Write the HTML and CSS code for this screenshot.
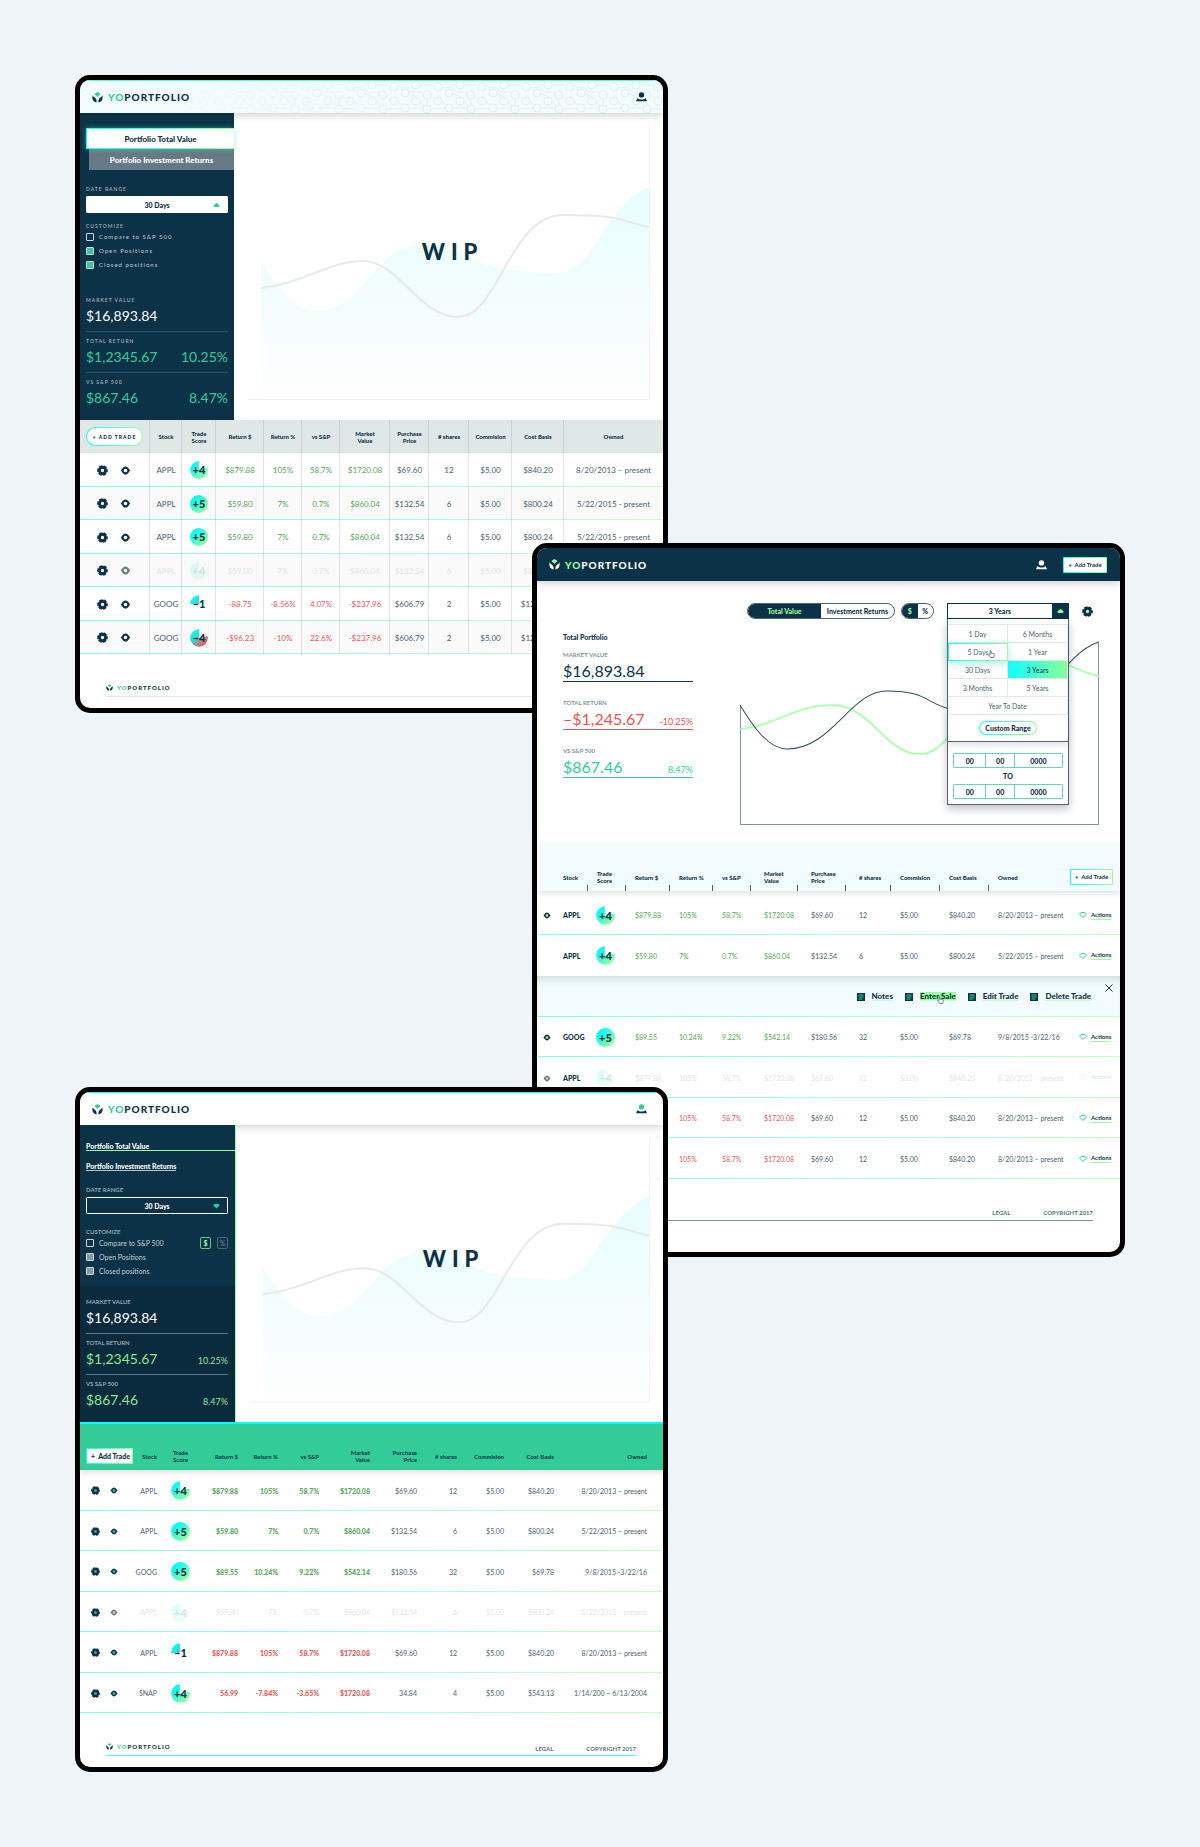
FILE: index.html
```html
<!DOCTYPE html>
<html lang="en">
<head>
<meta charset="utf-8">
<title>YoPortfolio</title>
<link rel="stylesheet" href="styles.css">
</head>
<body>
<svg class="defs" aria-hidden="true">
  <defs>
    <linearGradient id="area" x1="0" y1="0" x2="0" y2="1">
      <stop offset="0" stop-color="#e6feff"/><stop offset=".5" stop-color="#f2fdfc"/><stop offset="1" stop-color="#fefefe"/>
    </linearGradient>
    <pattern id="circuit" width="44" height="32" patternUnits="userSpaceOnUse">
      <g fill="none" stroke="#e3efef">
        <circle cx="6" cy="6" r="4"/><circle cx="28" cy="4" r="4"/><circle cx="17" cy="12" r="4"/><circle cx="39" cy="14" r="4"/>
        <circle cx="6" cy="20" r="4"/><circle cx="28" cy="20" r="4"/><circle cx="17" cy="27" r="4"/><circle cx="39" cy="28" r="4"/>
        <path d="M10 6h10l4 5h11M21 12l7 4M10 20l3 4M32 20l4 5M0 28h13M21 27h14M39 18v6M32 4h12"/>
      </g>
    </pattern>
  </defs>
  <symbol id="logo" viewBox="0 0 11 11">
    <path class="leaf-top" d="M2.6 1.9C3.4 1.6 4 .3 5.5.3S7.600 1.600 8.400 1.900C8.200 3.300 6.200 3 5.500 5 4.800 3 2.800 3.300 2.600 1.900Z"/>
    <path d="M.8 3.200C-.4 6.200.9 9.600 4.300 10.600 5.300 8.400 3.800 6 2.300 5.200 1.600 4.800 1 4.200.8 3.200ZM10.200 3.200C11.400 6.200 10.100 9.600 6.700 10.600 5.700 8.400 7.200 6 8.700 5.200 9.400 4.800 10 4.200 10.200 3.200Z"/>
  </symbol>
  <symbol id="user" viewBox="0 0 11 10">
    <circle class="head" cx="5.500" cy="2.900" r="2.700"/>
    <path d="M1.500 6C2.600 8 8.400 8 9.500 6L11 9.200H0Z"/>
  </symbol>
  <symbol id="gear" viewBox="0 0 12 12">
    <circle class="hole" cx="6" cy="6" r="2.500"/>
    <circle cx="6" cy="6" r="3.300" fill="none" stroke="currentColor" stroke-width="3"/>
    <circle cx="6" cy="6" r="4.700" fill="none" stroke="currentColor" stroke-width="2.200" stroke-dasharray="3.700 1.222" stroke-dashoffset="1.850"/>
  </symbol>
  <symbol id="eye" viewBox="0 0 12 10">
    <circle class="hole" cx="6" cy="5" r="2.500"/>
    <path fill-rule="evenodd" d="M.6 5C2 4.400 3 .6 6 .6S10 4.400 11.400 5C10 5.600 9 9.400 6 9.400S2 5.600.6 5ZM6 3A2 2 0 1 0 6 7 2 2 0 1 0 6 3Z"/>
  </symbol>
  <symbol id="spade" viewBox="0 0 7 6"><path d="M3.500.4C4 1.800 6.600 2.600 6.600 3.800S5 5 3.500 5 .4 5 .4 3.800 3 1.800 3.500.4Z"/></symbol>
  <symbol id="gem" viewBox="0 0 8 6"><path fill="none" stroke="currentColor" d="M2 .6H6L7.500 2.200 4 5.400.5 2.200Z"/></symbol>
  <symbol id="note" viewBox="0 0 8 8"><path d="M0 0H8V8H0Z"/><path stroke="#33cc99" d="M1.500 2H6.500M1.500 4H6.500M1.500 6H5.500"/></symbol>
  <symbol id="hand" viewBox="0 0 8 9"><path fill="#fff" stroke="#456" stroke-width=".8" d="M2.500 5V1C2.500.3 3.500.3 3.500 1V3.500L6.500 4C7.300 4.200 7.300 5 7 6.500L6.500 8.500H3L.8 5.500C.8 4.600 1.800 4.600 2.500 5Z"/></symbol>
  <symbol id="wip-chart" viewBox="0 0 429 307" preserveAspectRatio="none">
    <path fill="url(#area)" d="M27 147C40 170 58 198 82 198 112 198 125 175 142 157 158 139 170 132 189 132 215 132 235 145 250 151 265 157 300 160 323 160 350 160 366 120 379 105 390 91 400 80 415 74V285H27Z"/>
    <path class="curve" d="M27 175C70 170 95 148 129 148 165 148 185 204 224 204 265 204 275 102 329 102 395 102 390 110 415 114"/>
    <path class="frame" d="M415.500 12V286.500H14"/>
  </symbol>
</svg>

<main class="board">

<section class="window window-a">
  <header class="bar">
    <svg class="circuit" aria-hidden="true"><rect width="100%" height="100%" fill="url(#circuit)"/></svg>
    <a class="logo" href="#"><svg><use href="#logo"/></svg><span><b>YO</b>PORTFOLIO</span></a>
    <svg class="user"><use href="#user"/></svg>
  </header>
  <div class="hero">
    <aside class="side">
      <nav class="tabs">
        <button class="tab active">Portfolio Total Value</button>
        <button class="tab">Portfolio Investment Returns</button>
      </nav>
      <label class="caption range-label" for="range-a">DATE RANGE</label>
      <div class="select"><select id="range-a"><option>30 Days</option></select><svg><use href="#spade"/></svg></div>
      <div class="caption custom-label">CUSTOMIZE</div>
      <div class="checks">
        <label><input type="checkbox">Compare to S&amp;P 500</label>
        <label><input type="checkbox" checked>Open Positions</label>
        <label><input type="checkbox" checked>Closed positions</label>
      </div>
      <div class="stats">
        <div class="stat"><div class="caption">MARKET VALUE</div><p><span>$16,893.84</span></p></div>
        <div class="stat up"><div class="caption">TOTAL RETURN</div><p><span>$1,2345.67</span><span>10.25%</span></p></div>
        <div class="stat up"><div class="caption">VS S&amp;P 500</div><p><span>$867.46</span><span>8.47%</span></p></div>
      </div>
    </aside>
    <div class="chart"><svg><use href="#wip-chart"/></svg><h2>WIP</h2></div>
  </div>
  <table class="trades">
    <colgroup><col style="width:70px"><col style="width:32px"><col style="width:34px"><col style="width:48px"><col style="width:38px"><col style="width:38px"><col style="width:50px"><col style="width:39px"><col style="width:40px"><col style="width:43px"><col style="width:52px"><col style="width:99px"></colgroup>
    <thead><tr><th><button class="add">+ ADD TRADE</button></th><th>Stock</th><th>Trade<br>Score</th><th>Return $</th><th>Return %</th><th>vs S&amp;P</th><th>Market<br>Value</th><th>Purchase<br>Price</th><th># shares</th><th>Commision</th><th>Cost Basis</th><th>Owned</th></tr></thead>
    <tbody>
      <tr class="gain"><td class="tools"><svg><use href="#gear"/></svg><svg><use href="#eye"/></svg></td><td>APPL</td><td><span class="score four">+4</span></td><td>$879.88</td><td>105%</td><td>58.7%</td><td>$1720.08</td><td>$69.60</td><td>12</td><td>$5.00</td><td>$840.20</td><td>8/20/2013 – present</td></tr>
      <tr class="gain"><td class="tools"><svg><use href="#gear"/></svg><svg><use href="#eye"/></svg></td><td>APPL</td><td><span class="score">+5</span></td><td>$59.80</td><td>7%</td><td>0.7%</td><td>$860.04</td><td>$132.54</td><td>6</td><td>$5.00</td><td>$800.24</td><td>5/22/2015 - present</td></tr>
      <tr class="gain"><td class="tools"><svg><use href="#gear"/></svg><svg><use href="#eye"/></svg></td><td>APPL</td><td><span class="score">+5</span></td><td>$59.80</td><td>7%</td><td>0.7%</td><td>$860.04</td><td>$132.54</td><td>6</td><td>$5.00</td><td>$800.24</td><td>5/22/2015 - present</td></tr>
      <tr class="muted"><td class="tools"><svg><use href="#gear"/></svg><svg><use href="#eye"/></svg></td><td>APPL</td><td><span class="score four">+4</span></td><td>$59.80</td><td>7%</td><td>0.7%</td><td>$860.04</td><td>$132.54</td><td>6</td><td>$5.00</td><td>$800.24</td><td></td></tr>
      <tr class="loss"><td class="tools"><svg><use href="#gear"/></svg><svg><use href="#eye"/></svg></td><td>GOOG</td><td><span class="score one bad">–1</span></td><td>-88.75</td><td>-8.56%</td><td>4.07%</td><td>-$237.96</td><td>$606.79</td><td>2</td><td>$5.00</td><td>$1213.58</td><td></td></tr>
      <tr class="loss"><td class="tools"><svg><use href="#gear"/></svg><svg><use href="#eye"/></svg></td><td>GOOG</td><td><span class="score four bad">–4</span></td><td>-$96.23</td><td>-10%</td><td>22.6%</td><td>-$237.96</td><td>$606.79</td><td>2</td><td>$5.00</td><td>$1213.58</td><td></td></tr>
    </tbody>
  </table>
  <footer class="foot"><a class="logo small" href="#"><svg><use href="#logo"/></svg><span><b>YO</b>PORTFOLIO</span></a></footer>
</section>

<section class="window window-b">
  <header class="bar">
    <a class="logo" href="#"><svg><use href="#logo"/></svg><span><b>YO</b>PORTFOLIO</span></a>
    <svg class="user"><use href="#user"/></svg>
    <button class="add">+ &nbsp;Add Trade</button>
  </header>
  <div class="overview">
    <div class="totals">
      <h2>Total Portfolio</h2>
      <div class="total"><div class="caption">MARKET VALUE</div><p><span>$16,893.84</span></p></div>
      <div class="total down"><div class="caption">TOTAL RETURN</div><p><span>–$1,245.67</span><small>-10.25%</small></p></div>
      <div class="total up"><div class="caption">VS S&amp;P 500</div><p><span>$867.46</span><small>8.47%</small></p></div>
    </div>
    <div class="panel">
      <div class="controls">
        <div class="segment wide"><button class="on">Total Value</button><button>Investment Returns</button></div>
        <div class="segment"><button class="on">$</button><button>%</button></div>
        <div class="picker">
          <button class="current"><span>3 Years</span><i><svg><use href="#spade"/></svg></i></button>
          <div class="menu">
            <div class="options">
              <button>1 Day</button><button>6 Months</button>
              <button class="hover">5 Days<svg class="hand"><use href="#hand"/></svg></button><button>1 Year</button>
              <button>30 Days</button><button class="chosen">3 Years</button>
              <button>3 Months</button><button>5 Years</button>
              <button class="full">Year To Date</button>
            </div>
            <div class="custom"><button>Custom Range</button></div>
            <div class="dates">
              <div class="date"><input aria-label="From month" value="00"><input aria-label="From day" value="00"><input aria-label="From year" value="0000"></div>
              <span>TO</span>
              <div class="date"><input aria-label="To month" value="00"><input aria-label="To day" value="00"><input aria-label="To year" value="0000"></div>
            </div>
          </div>
        </div>
        <svg class="gear"><use href="#gear"/></svg>
      </div>
      <svg class="graph" viewBox="0 0 358 184" preserveAspectRatio="none">
        <path class="axis" d="M.5 64V183.500H357.500V1"/>
        <path class="glow" d="M0 88C35 85 55 64 92 64 130 64 145 113 179 113 225 113 225 12 285 12 315 12 328 29 358 35"/>
        <path class="lime" d="M0 88C35 85 55 64 92 64 130 64 145 113 179 113 225 113 225 12 285 12 315 12 328 29 358 35"/>
        <path class="navy" d="M0 64C12 84 28 108 47 108 92 108 110 50 146 50 185 50 185 61 206 67 235 76 270 76 290 66 308 54 328 10 358 1"/>
      </svg>
    </div>
  </div>
  <table class="trades">
    <colgroup><col style="width:17px"><col style="width:34px"><col style="width:38px"><col style="width:44px"><col style="width:43px"><col style="width:38px"><col style="width:47px"><col style="width:48px"><col style="width:45px"><col style="width:49px"><col style="width:49px"><col style="width:81px"><col style="width:50px"></colgroup>
    <thead><tr><th></th><th>Stock</th><th>Trade<br>Score</th><th>Return $</th><th>Return %</th><th>vs S&amp;P</th><th>Market<br>Value</th><th>Purchase<br>Price</th><th># shares</th><th>Commision</th><th>Cost Basis</th><th>Owned</th><th><button class="add">+ &nbsp;Add Trade</button></th></tr></thead>
    <tbody>
      <tr class="gain"><td class="tools"><svg><use href="#eye"/></svg></td><td>APPL</td><td><span class="score four">+4</span></td><td>$879.88</td><td>105%</td><td>58.7%</td><td>$1720.08</td><td>$69.60</td><td>12</td><td>$5.00</td><td>$840.20</td><td>8/20/2013 – present</td><td><a class="act" href="#"><svg><use href="#gem"/></svg><span>Actions</span></a></td></tr>
      <tr class="gain open"><td></td><td>APPL</td><td><span class="score four">+4</span></td><td>$59.80</td><td>7%</td><td>0.7%</td><td>$860.04</td><td>$132.54</td><td>6</td><td>$5.00</td><td>$800.24</td><td>5/22/2015 – present</td><td><a class="act" href="#"><svg><use href="#gem"/></svg><span>Actions</span></a></td></tr>
      <tr class="drawer"><td colspan="13"><div class="links">
        <a href="#"><svg><use href="#note"/></svg><span>Notes</span></a>
        <a class="hover" href="#"><svg><use href="#note"/></svg><span>Enter Sale<svg class="hand"><use href="#hand"/></svg></span></a>
        <a href="#"><svg><use href="#note"/></svg><span>Edit Trade</span></a>
        <a href="#"><svg><use href="#note"/></svg><span>Delete Trade</span></a>
        <button class="close" aria-label="Close"><svg viewBox="0 0 8 8"><path d="M.5.5 7.500 7.500M7.500.5.5 7.500"/></svg></button>
      </div></td></tr>
      <tr class="gain"><td class="tools"><svg><use href="#eye"/></svg></td><td>GOOG</td><td><span class="score">+5</span></td><td>$89.55</td><td>10.24%</td><td>9.22%</td><td>$542.14</td><td>$180.56</td><td>32</td><td>$5.00</td><td>$69.78</td><td>9/8/2015 -3/22/16</td><td><a class="act" href="#"><svg><use href="#gem"/></svg><span>Actions</span></a></td></tr>
      <tr class="muted"><td class="tools"><svg><use href="#eye"/></svg></td><td>APPL</td><td><span class="score four">+4</span></td><td>$879.88</td><td>105%</td><td>58.7%</td><td>$1720.08</td><td>$69.60</td><td>12</td><td>$5.00</td><td>$840.20</td><td>8/20/2013 – present</td><td><a class="act" href="#"><svg><use href="#gem"/></svg><span>Actions</span></a></td></tr>
      <tr class="loss"><td></td><td></td><td></td><td></td><td>105%</td><td>58.7%</td><td>$1720.08</td><td>$69.60</td><td>12</td><td>$5.00</td><td>$840.20</td><td>8/20/2013 – present</td><td><a class="act" href="#"><svg><use href="#gem"/></svg><span>Actions</span></a></td></tr>
      <tr class="loss"><td></td><td></td><td></td><td></td><td>105%</td><td>58.7%</td><td>$1720.08</td><td>$69.60</td><td>12</td><td>$5.00</td><td>$840.20</td><td>8/20/2013 – present</td><td><a class="act" href="#"><svg><use href="#gem"/></svg><span>Actions</span></a></td></tr>
    </tbody>
  </table>
  <footer class="foot"><a class="legal" href="#">LEGAL</a><span>COPYRIGHT 2017</span></footer>
</section>

<section class="window window-c">
  <header class="bar">
    <a class="logo" href="#"><svg><use href="#logo"/></svg><span><b>YO</b>PORTFOLIO</span></a>
    <svg class="user"><use href="#user"/></svg>
  </header>
  <div class="hero">
    <aside class="side">
      <nav class="tabs">
        <button class="tab active">Portfolio Total Value</button>
        <button class="tab">Portfolio Investment Returns</button>
      </nav>
      <label class="caption range-label" for="range-c">DATE RANGE</label>
      <div class="select"><select id="range-c"><option>30 Days</option></select><svg><use href="#spade"/></svg></div>
      <div class="caption custom-label">CUSTOMIZE</div>
      <div class="custom-row">
        <div class="checks">
          <label><input type="checkbox">Compare to S&amp;P 500</label>
          <label><input type="checkbox" checked>Open Positions</label>
          <label><input type="checkbox" checked>Closed positions</label>
        </div>
        <div class="units"><button class="on">$</button><button>%</button></div>
      </div>
      <div class="stats">
        <div class="stat"><div class="caption">MARKET VALUE</div><p><span>$16,893.84</span></p></div>
        <div class="stat up"><div class="caption">TOTAL RETURN</div><p><span>$1,2345.67</span><small>10.25%</small></p></div>
        <div class="stat up"><div class="caption">VS S&amp;P 500</div><p><span>$867.46</span><small>8.47%</small></p></div>
      </div>
    </aside>
    <div class="chart"><svg><use href="#wip-chart"/></svg><h2>WIP</h2></div>
  </div>
  <table class="trades">
    <colgroup><col style="width:54px"><col style="width:23px"><col style="width:47px"><col style="width:34px"><col style="width:40px"><col style="width:41px"><col style="width:51px"><col style="width:47px"><col style="width:40px"><col style="width:47px"><col style="width:50px"><col style="width:109px"></colgroup>
    <thead><tr><th><button class="add">+ &nbsp;Add Trade</button></th><th>Stock</th><th>Trade<br>Score</th><th>Return $</th><th>Return %</th><th>vs S&amp;P</th><th>Market<br>Value</th><th>Purchase<br>Price</th><th># shares</th><th>Commision</th><th>Cost Basis</th><th>Owned</th></tr></thead>
    <tbody>
      <tr class="gain"><td class="tools"><svg><use href="#gear"/></svg><svg><use href="#eye"/></svg></td><td>APPL</td><td><span class="score four">+4</span></td><td>$879.88</td><td>105%</td><td>58.7%</td><td>$1720.08</td><td>$69.60</td><td>12</td><td>$5.00</td><td>$840.20</td><td>8/20/2013 – present</td></tr>
      <tr class="gain"><td class="tools"><svg><use href="#gear"/></svg><svg><use href="#eye"/></svg></td><td>APPL</td><td><span class="score">+5</span></td><td>$59.80</td><td>7%</td><td>0.7%</td><td>$860.04</td><td>$132.54</td><td>6</td><td>$5.00</td><td>$800.24</td><td>5/22/2015 – present</td></tr>
      <tr class="gain"><td class="tools"><svg><use href="#gear"/></svg><svg><use href="#eye"/></svg></td><td>GOOG</td><td><span class="score">+5</span></td><td>$89.55</td><td>10.24%</td><td>9.22%</td><td>$542.14</td><td>$180.56</td><td>32</td><td>$5.00</td><td>$69.78</td><td>9/8/2015 -3/22/16</td></tr>
      <tr class="muted"><td class="tools"><svg><use href="#gear"/></svg><svg><use href="#eye"/></svg></td><td>APPL</td><td><span class="score four">+4</span></td><td>$59.80</td><td>7%</td><td>0.7%</td><td>$860.04</td><td>$132.54</td><td>6</td><td>$5.00</td><td>$800.24</td><td>5/22/2015 – present</td></tr>
      <tr class="loss"><td class="tools"><svg><use href="#gear"/></svg><svg><use href="#eye"/></svg></td><td>APPL</td><td><span class="score one bad">–1</span></td><td>$879.88</td><td>105%</td><td>58.7%</td><td>$1720.08</td><td>$69.60</td><td>12</td><td>$5.00</td><td>$840.20</td><td>8/20/2013 – present</td></tr>
      <tr class="loss"><td class="tools"><svg><use href="#gear"/></svg><svg><use href="#eye"/></svg></td><td>SNAP</td><td><span class="score four">+4</span></td><td>56.99</td><td>-7.84%</td><td>-3.65%</td><td>$1720.08</td><td>34.84</td><td>4</td><td>$5.00</td><td>$543.13</td><td>1/14/200 – 6/13/2004</td></tr>
    </tbody>
  </table>
  <footer class="foot"><a class="logo small" href="#"><svg><use href="#logo"/></svg><span><b>YO</b>PORTFOLIO</span></a><a class="legal" href="#">LEGAL</a><span>COPYRIGHT 2017</span></footer>
</section>

</main>
</body>
</html>
```
FILE: styles.css
```css
:root {
  --navy: #0c3247;
  --deep: #0a2a3d;
  --green: #33cc99;
  --lime: #99ff99;
  --cyan: #00ffff;
  --up: #56a85a;
  --down: #e05a5a;
  --fade: linear-gradient(90deg, #7ffff5, #c4ffc9);
  --glow: linear-gradient(90deg, #1ff, #9f9);
}
* { box-sizing: border-box; }
body {
  margin: 0;
  background: #eef4f7;
  color: var(--navy);
  font: 7px/8px Lato, "Liberation Sans", sans-serif;
}
.defs { position: absolute; width: 0; height: 0; }
h2, p { margin: 0; }
svg { display: block; fill: currentColor; flex: none; }
a { color: inherit; text-decoration: none; }
button, input, select { font: inherit; color: inherit; margin: 0; padding: 0; border: 0; background: none; border-radius: 0; white-space: nowrap; }

/* Overlapping windows on a three-column board */
.board {
  display: grid;
  grid-template-columns: 457fr 136fr 457fr;
  padding: 75px;
}
.window {
  background: #fff;
  border: 5px solid #000;
  border-radius: 15px;
  overflow: hidden;
  position: relative;
  min-width: 0;
}
.window-a, .window-c { grid-column: 1 / 3; }
.window-b { grid-column: 2 / 4; --hole: #99ff99; --leaf: #99ff99; }
.window-c { --hole: #33cc99; }
.window-b, .window-c { margin-top: -170px; }

/* Header */
.bar {
  display: flex;
  align-items: center;
  height: 33px;
  padding: 0 16px 0 12px;
  position: relative;
  z-index: 2;
  background: #fff;
  box-shadow: 0 2px 8px rgba(0, 20, 30, .2);
}
.window-a .bar { background: #f2fbfd; border-top: 1px solid #5fd; }
.window-c .bar { border-top: 1px solid var(--cyan); }
.window-b .bar { background: var(--navy); color: #fff; padding-right: 13px; }
.circuit {
  position: absolute;
  inset: 0;
  width: 100%;
  height: 100%;
  mask-image: linear-gradient(90deg, transparent 15%, #000 60%);
}
.logo { display: flex; align-items: center; gap: 5px; font-size: 10px; line-height: 12px; font-weight: 900; letter-spacing: 1px; position: relative; }
.logo svg { width: 11px; height: 11px; }
.logo b { color: var(--green); font-weight: 900; }
.leaf-top { fill: var(--leaf, #33cc99); }
.window-b .logo b { color: var(--lime); }
.logo.small { font-size: 6px; gap: 4px; line-height: 8px; }
.logo.small svg { width: 7px; height: 7px; }
.user { width: 11px; height: 10px; margin-left: auto; position: relative; }
.window-c .user { --head: #33cc99; }
.head { fill: var(--head, currentColor); }
.add {
  height: 16px;
  padding: 0 4px;
  font-size: 6px;
  line-height: 8px;
  font-weight: 900;
  color: var(--navy);
  border: 1px solid transparent;
  border-radius: 1px;
  background: linear-gradient(#fff, #fff) padding-box, var(--glow) border-box;
}
.bar .add { margin-left: 16px; width: 44px; }

/* Sidebar */
.hero { display: flex; }
.side { width: 154px; flex: none; background: var(--navy); color: #fff; padding: 15px 6px 0; position: relative; z-index: 3; }
.tabs { display: flex; flex-direction: column; align-items: stretch; margin-right: -6px; }
.tab { height: 21px; font-size: 7px; font-weight: 900; }
.window-a .tab { background: #667a85; margin-left: 3px; font-size: 8px; }
.window-a .tab.active {
  margin-left: 0;
  color: var(--navy);
  border: 1px solid transparent;
  border-right: 0;
  background: linear-gradient(#fff, #fff) padding-box, var(--glow) border-box;
  box-shadow: 0 0 5px rgba(51, 255, 200, .5);
  position: relative;
}
.caption { font-size: 6px; line-height: 6px; font-weight: 700; color: #8496a1; }
.window-a .caption { font-size: 5px; letter-spacing: 1px; }
.side .caption { color: #93a4ae; }
label.caption { display: block; }
.range-label { margin-top: 16px; }
.select { display: grid; align-items: center; margin-top: 4px; }
.select > * { grid-area: 1 / 1; }
.select select {
  appearance: none;
  height: 17px;
  width: 100%;
  border: 1px solid #fff;
  border-radius: 1px;
  text-align: center;
  text-align-last: center;
  font-weight: 900;
}
.window-a .select select { background: #fff; color: var(--navy); }
.select svg { width: 7px; height: 6px; justify-self: end; margin-right: 8px; color: var(--green); pointer-events: none; }
.window-c .select svg { rotate: 180deg; }
.custom-label { margin-top: 10px; }
.checks { margin-top: 1px; color: #c3ced4; }
.checks label { display: flex; align-items: center; gap: 5px; height: 14px; }
.window-a .checks label { font-size: 6px; letter-spacing: 1px; }
.checks input { appearance: none; width: 8px; height: 8px; border: 1px solid #cdd6da; border-radius: 1px; }
.checks input:checked { background: var(--green); }
.window-c .checks input:checked { background: #8599a3; }
.stats { padding: 25px 0 7px; }
.stat { margin-bottom: 6px; border-bottom: 1px solid #2c4e61; padding-bottom: 6px; }
.stat:last-child { border-bottom: 0; margin: 0; }
.stat p { margin-top: 4px; display: flex; justify-content: space-between; align-items: baseline; font-size: 14px; line-height: 18px; font-weight: 400; }
.stat small { font-size: 9px; line-height: 10px; }
.window-a .up p { color: var(--green); }

.window-c .side { width: 156px; border-right: 1px solid var(--lime); padding: 17px 7px 0 6px; }
.window-c .tabs { margin-right: -7px; gap: 11px; align-items: flex-start; }
.window-c .tab { height: 9px; border-bottom: 1px solid #b5c2c9; text-align: left; }
.window-c .tab.active { border-color: var(--lime); align-self: stretch; }
.window-c .custom-label { margin-top: 15px; }
.window-c .stats { margin: 8px -7px 0 -6px; padding: 13px 7px 7px 6px; background: var(--deep); }
.window-c .stat { border-color: #5d7786; }
.window-c .up p { color: #8be88f; }
.custom-row { display: flex; justify-content: space-between; }
.units { display: flex; gap: 6px; margin-top: 2px; }
.units button { width: 11px; height: 12px; border: 1px solid #4b6777; border-radius: 2px; color: #71879a; line-height: 8px; }
.units .on { border-color: #67c584; color: var(--lime); font-weight: 900; }

/* Work-in-progress chart */
.chart { flex: 1; min-width: 0; display: grid; }
.chart > * { grid-area: 1 / 1; }
.chart svg { width: 100%; height: 100%; }
.chart h2 { place-self: center; font-size: 22px; line-height: 28px; font-weight: 900; letter-spacing: 6px; padding: 0 0 29px 8px; }
.curve { fill: none; stroke: #e6eaea; stroke-width: 2px; }
.frame { fill: none; stroke: #f0f2f3; }

/* Trades tables */
.trades { width: 100%; table-layout: fixed; border-collapse: separate; border-spacing: 0; }
.trades th, .trades td { padding: 0; white-space: nowrap; text-align: center; }
.trades th { font-size: 6px; line-height: 7px; font-weight: 900; }
.trades td { color: #4a6473; }
.trades tbody tr { background: var(--fade) bottom / 100% 1px no-repeat; }
.trades .gain td:nth-child(n+4):nth-child(-n+7) { color: var(--up); }
.trades .loss td:nth-child(n+4):nth-child(-n+7) { color: var(--down); }
.trades .muted td { color: #e3e6e8; }
.trades td.tools { color: var(--navy); }
.tools svg { display: inline-block; vertical-align: middle; width: 11px; height: 11px; }
.hole { fill: var(--hole, none); }
.trades .muted .tools svg:last-child { color: #6c7a82; --hole: #c5ccd0; }
.window-a .trades .muted .tools svg:last-child { --hole: none; }
.score {
  display: inline-block;
  width: 19px;
  height: 19px;
  font-size: 11px;
  line-height: 19px;
  font-weight: 900;
  color: var(--navy);
  text-align: center;
  vertical-align: middle;
  position: relative;
  isolation: isolate;
}
.score::before {
  content: "";
  position: absolute;
  inset: 0;
  z-index: -1;
  border-radius: 50%;
  background: linear-gradient(135deg, #0ff 20%, #9f9 85%);
}
.score.four::before { mask-image: conic-gradient(transparent 78deg, #000 78deg); }
.score.one::before { mask-image: conic-gradient(transparent 270deg, #000 270deg); }
.score.bad::before { background: linear-gradient(135deg, #0ff 20%, #7aa9a9 55%, #f55 80%); }
.muted .score { opacity: .14; }

.window-a .trades thead { background: #dfe8e7; }
.window-a .trades th { height: 33px; }
.window-a .trades td { height: 34px; font-size: 8px; }
.window-a .trades tr:nth-child(even) td { height: 33px; }
.window-a .trades tbody tr:nth-child(even) { background: var(--fade) bottom / 100% 1px no-repeat, #fafafa; }
.window-a .trades th:not(:last-child), .window-a .trades td:not(:last-child) { background: linear-gradient(rgba(12, 50, 71, .12), rgba(12, 50, 71, .12)) right / 1px 100% no-repeat; }
.window-a .trades td.tools { padding-right: 2px; }
.window-a .tools svg + svg { margin-left: 12px; }
.window-a .trades .score { width: 18px; height: 18px; line-height: 18px; }
.window-a .add { width: 57px; height: 19px; margin-right: 1px; border-radius: 10px; font-size: 5px; letter-spacing: 1px; }

.window-b .trades th, .window-b .trades td { text-align: left; padding-left: 9px; }
.window-b .trades th:nth-child(n+7):nth-child(-n+9), .window-b .trades td:nth-child(n+7):nth-child(-n+9) { padding-left: 13px; }
.window-b .trades thead { position: relative; z-index: 1; background: #f2fbfd; box-shadow: 0 2px 6px rgba(0, 20, 30, .14); }
.window-b .trades th { height: 46px; padding-top: 18px; }
.window-b .trades th:nth-child(n+2):nth-child(-n+11) { background: linear-gradient(#4a6473, #4a6473) right bottom / 1px 6px no-repeat; }
.window-b .trades tbody td { height: 41px; }
.window-b .trades tbody tr:first-child td { height: 44px; padding-top: 4px; }
.window-b .trades tbody tr:nth-child(n+4):nth-child(even) td { height: 40px; }
.window-b .trades td:nth-child(2) { font-weight: 900; color: var(--navy); }
.window-b .trades td:nth-child(3) { padding-left: 8px; }
.window-b .trades td.tools { padding-left: 6px; }
.window-b .tools svg { width: 8px; height: 7px; }
.window-b .trades th:last-child { padding-left: 0; }
.window-b .trades td:last-child { padding-left: 9px; }
.window-b .add { font-weight: 700; }
.window-b th .add { width: 43px; }
.trades tbody .open { background: none; }
.act { display: flex; align-items: center; gap: 4px; color: var(--navy); font-size: 6px; font-weight: 700; }
.act svg { width: 8px; height: 6px; color: var(--green); }
.act span { border-bottom: 1px solid var(--lime); }
.muted .act { opacity: .15; }
.window-b .trades .drawer td { padding: 0 7px 0 0; font-weight: 400; background: var(--fade) bottom / 100% 1px no-repeat, #f2fbfd; box-shadow: inset 0 8px 8px -5px rgba(12, 50, 71, .16); }
.links { display: flex; justify-content: flex-end; align-items: center; gap: 12px; color: var(--navy); font-size: 8px; font-weight: 900; }
.links a { display: flex; align-items: center; gap: 7px; }
.links a > svg { width: 8px; height: 8px; }
.links a span { border-bottom: 1px solid #c4ffc9; position: relative; }
.links .hover span { background: var(--lime); }
.hand { position: absolute; width: 7px; height: 8px; right: 12px; top: 4px; }
.close { align-self: flex-start; margin: -8px 0 8px 2px; }
.close svg { width: 8px; height: 8px; stroke: var(--navy); }

.window-c .trades thead { position: relative; z-index: 1; background: var(--green); box-shadow: 0 2px 6px rgba(0, 20, 30, .14); }
.window-c .trades th { height: 48px; padding-top: 18px; border-top: 2px solid var(--cyan); font-weight: 700; }
.window-c .trades th, .window-c .trades td { text-align: right; }
.window-c .trades tbody td { height: 41px; }
.window-c .trades tbody tr:nth-child(even) td { height: 40px; }
.window-c .trades th:nth-child(3), .window-c .trades td:nth-child(3) { text-align: center; }
.window-c .trades th:first-child, .window-c .trades td:first-child { text-align: left; padding-left: 6px; }
.window-c .trades td.tools { padding-left: 11px; }
.window-c .trades th:last-child, .window-c .trades td:last-child { padding-right: 16px; }
.window-c .tools svg { width: 9px; height: 9px; }
.window-c .tools svg + svg { width: 8px; margin-left: 10px; }
.window-c .gain td:nth-child(n+4):nth-child(-n+7), .window-c .loss td:nth-child(n+4):nth-child(-n+7) { font-weight: 900; }
.window-c .add { width: 47px; font-size: 7px; }

/* Footer */
.foot { display: flex; align-items: center; gap: 33px; height: 14px; margin: 29px 27px 11px 26px; border-bottom: 1px solid #e0e5e7; font-size: 6px; line-height: 6px; font-weight: 700; color: #5b7280; }
.foot .logo { color: var(--navy); margin-right: auto; padding-bottom: 4px; }
.foot .legal { margin-left: auto; }
.window-b .foot { margin: 28px 27px 31px 26px; padding-bottom: 2px; border-color: #7d94a1; }
.window-c .foot { border-color: #4ff; }

/* Overview panel */
.overview { display: flex; gap: 47px; padding: 22px 21px 20px 26px; }
.totals { width: 130px; flex: none; padding-top: 30px; display: flex; flex-direction: column; }
.totals h2 { font-size: 7px; line-height: 8px; font-weight: 900; margin-bottom: 11px; }
.total { margin-bottom: 18px; border-bottom: 1px solid currentColor; }
.total p { display: flex; justify-content: space-between; align-items: baseline; margin-top: 3px; font-size: 16px; line-height: 20px; font-weight: 400; }
.total small { font-size: 9px; line-height: 10px; }
.total.down { color: #e25555; }
.total.up { color: var(--green); }
.panel { flex: 1; min-width: 0; display: flex; flex-direction: column; gap: 22px; }
.controls { display: flex; align-items: center; padding: 0 6px 0 7px; height: 16px; font-size: 7px; font-weight: 900; }
.segment { display: flex; width: 33px; height: 16px; border: 1px solid #4a6473; border-radius: 8px; overflow: hidden; margin-right: 13px; }
.segment.wide { width: 148px; margin-right: 6px; }
.segment button { flex: 1 1 0; }
.segment .on { background: var(--navy); color: var(--lime); }
.picker { width: 122px; position: relative; margin-right: auto; }
.current { display: flex; align-items: stretch; width: 100%; height: 16px; border: 1px solid var(--navy); background: #fff; line-height: 14px; }
.current span { flex: 1; }
.current i { width: 16px; background: var(--navy); color: var(--lime); display: grid; place-items: center; }
.current svg { width: 7px; height: 6px; }
.controls .gear { width: 11px; height: 11px; }
.menu { position: absolute; z-index: 1; top: 16px; left: 0; width: 100%; background: #fff; border: 1px solid #4a6473; border-top: 0; box-shadow: 0 4px 8px rgba(0, 20, 30, .25); }
.options { display: grid; grid-template-columns: 1fr 1fr; border-top: 1px solid #e2e7e9; margin-top: 5px; font-size: 7px; font-weight: 400; color: #4a6473; }
.options button { height: 18px; border-bottom: 1px solid #e2e7e9; border-right: 1px solid #e2e7e9; position: relative; }
.options .full { grid-column: 1 / 3; }
.options .hover { border: 1px solid transparent; background: linear-gradient(#fff, #fff) padding-box, var(--glow) border-box; box-shadow: 0 2px 8px rgba(90, 220, 190, .5); z-index: 1; }
.options .chosen { background: linear-gradient(90deg, #1ff, #8f9); color: var(--navy); }
.options .hand { top: 6px; right: 12px; }
.custom { display: grid; place-items: center; height: 27px; border-bottom: 1px solid #4a6473; box-shadow: 0 3px 6px rgba(0, 20, 30, .12); }
.custom button { width: 58px; height: 14px; border: 1px solid transparent; border-radius: 7px; background: linear-gradient(#fff, #fff) padding-box, var(--glow) border-box; }
.dates { display: flex; flex-direction: column; align-items: stretch; gap: 4px; padding: 11px 5px 5px; text-align: center; }
.date { display: flex; border: 1px solid #64d8b0; border-radius: 1px; }
.date input { height: 13px; min-width: 0; width: 0; flex: 32; text-align: center; border-right: 1px solid #64d8b0; font-weight: 900; }
.date input:nth-child(2) { flex-grow: 28; }
.date input:last-child { flex-grow: 48; border-right: 0; }
.graph { width: 100%; height: 184px; overflow: visible; }
.graph path { fill: none; }
.axis { stroke: #7d94a1; }
.navy { stroke: #2d4d60; }
.lime { stroke: var(--lime); }
.glow { stroke: rgba(153, 255, 153, .25); stroke-width: 3px; }
```
